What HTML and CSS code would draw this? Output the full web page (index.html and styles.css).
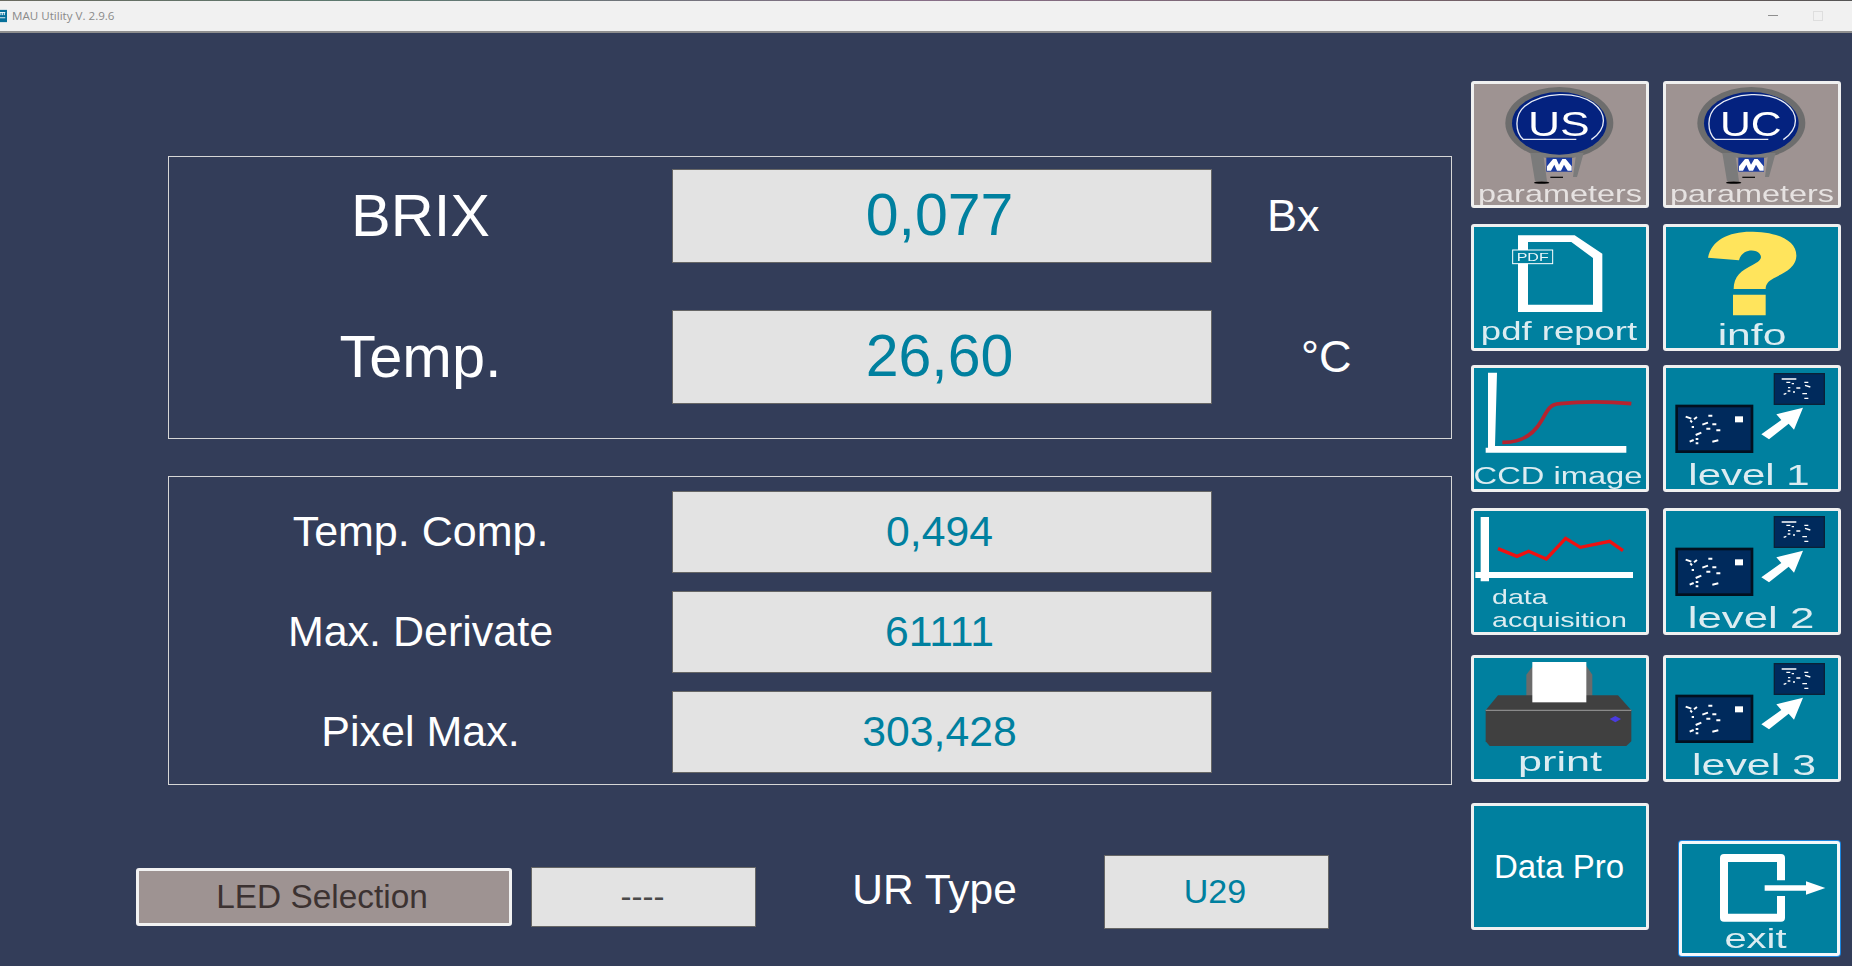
FILE: index.html
```html
<!DOCTYPE html>
<html lang="en">
<head>
<meta charset="utf-8">
<title>MAU Utility</title>
<link rel="stylesheet" href="styles.css">
</head>
<body>
<svg class="defs" width="0" height="0" aria-hidden="true">
  <defs>
    <g id="bulb">
      <ellipse cx="299" cy="160" rx="162" ry="108" fill="#6d6d6d"/>
      <path d="M212 250 L226 335 H262 L252 262 H348 L340 322 H352 L372 250 Z" fill="#7b7b7b"/>
      <ellipse cx="299" cy="161" rx="142" ry="94" fill="#04227f"/>
      <path d="M350 209 H190 C165 185 165 135 195 110 C250 65 350 65 400 100 C440 130 445 175 395 210" fill="none" stroke="#e8ecf6" stroke-width="4"/>
      <rect x="260" y="264" width="77" height="42" fill="#1a3aa0"/>
      <path d="M262 303 V290 L280 268 H290 L298 285 L308 268 H318 L336 290 V303 H324 L313 285 L304 303 H292 L284 285 L274 303 Z" fill="#fff"/>
      <ellipse cx="246" cy="339" rx="23" ry="3.5" fill="#000"/>
      <rect x="272" y="321" width="38" height="4" fill="#111"/>
    </g>
    <g id="level">
      <rect x="651" y="155" width="226" height="137" fill="#002a5c" stroke="#02101f" stroke-width="8"/>
      <rect x="944" y="58" width="150" height="92" fill="#002a5c" stroke="#0a2138" stroke-width="4"/>
      <polygon points="905,240 965,197 950,180 1030,160 1003,226 987,208 928,255" fill="#fff"/>
      <rect x="826" y="186" width="24" height="18" fill="#fff"/>
      <path d="M678 187 L695 193 M712 188 L703 195 M692 198 L697 204 M746 184 H758 M696 218 H703 M728 211 L745 205 M758 210 H770 M740 223 H752 M770 228 H782 M708 242 L725 235 M690 262 L702 257 M708 254 H716 M708 267 H716 M758 262 L776 258" stroke="#fff" stroke-width="6" fill="none"/>
      <path d="M966 74 H1010 M980 84 H992 M996 88 H1003 M1034 84 H1046 M1036 93 L1052 98 M1010 101 H1022 M985 100 H992 M984 110 H992 M972 120 L980 117 M1000 113 H1006 M1028 118 H1042 M1034 132 H1046" stroke="#fff" stroke-width="4" fill="none"/>
    </g>
  </defs>
</svg>

<header class="titlebar">
  <div class="title-left">
    <svg class="app-icon" viewBox="0 0 8 14"><rect width="8" height="14" fill="#06709a"/><path d="M0 3h6M1 3v3M3 3v3M5 3v3M0 9h6" stroke="#fff" stroke-width="1"/></svg>
    <span class="title-text">MAU Utility V. 2.9.6</span>
  </div>
  <div class="win-controls">
    <span class="win-min"></span>
    <span class="win-max"></span>
  </div>
</header>

<main class="content">
  <section class="left">
    <div class="panel panel-main">
      <div class="row row-big">
        <div class="label label-big">BRIX</div>
        <div class="field field-big">0,077</div>
        <div class="unit unit-bx">Bx</div>
      </div>
      <div class="row row-big">
        <div class="label label-big">Temp.</div>
        <div class="field field-big">26,60</div>
        <div class="unit unit-c">°C</div>
      </div>
    </div>

    <div class="panel panel-sub">
      <div class="row row-small">
        <div class="label label-small">Temp. Comp.</div>
        <div class="field field-small">0,494</div>
      </div>
      <div class="row row-small">
        <div class="label label-small">Max. Derivate</div>
        <div class="field field-small">61111</div>
      </div>
      <div class="row row-small">
        <div class="label label-small">Pixel Max.</div>
        <div class="field field-small">303,428</div>
      </div>
    </div>

    <div class="bottom">
      <div class="led-btn">LED Selection</div>
      <div class="dash-field">----</div>
      <div class="ur-label">UR Type</div>
      <div class="ur-field">U29</div>
    </div>
  </section>

  <aside class="right">
    <div class="tile-row">
      <div class="tile tile-gray">
        <svg class="art" viewBox="43 43 516 270"><use href="#bulb"/><text class="logo-text" x="205" y="199" textLength="185" lengthAdjust="spacingAndGlyphs">US</text></svg>
        <div class="cap cap-params">parameters</div>
      </div>
      <div class="tile tile-gray">
        <svg class="art" viewBox="43 43 516 270"><use href="#bulb"/><text class="logo-text" x="205" y="199" textLength="185" lengthAdjust="spacingAndGlyphs">UC</text></svg>
        <div class="cap cap-params">parameters</div>
      </div>
    </div>

    <div class="tile-row gap-16">
      <div class="tile">
        <svg class="art" viewBox="43 472 516 270">
          <path fill-rule="evenodd" fill="#fff" d="M175 497 H345 L428 552 V727 H175 Z M205 517 V705 H400 V565 L335 517 Z"/>
          <rect x="159" y="541" width="120" height="41" fill="#00809f" stroke="#fff" stroke-width="3"/>
          <text class="pdf-text" x="219" y="574" textLength="96" lengthAdjust="spacingAndGlyphs">PDF</text>
        </svg>
        <div class="cap cap-pdf">pdf report</div>
      </div>
      <div class="tile">
        <svg class="art" viewBox="619 472 516 270">
          <path fill="#ffe45c" d="M745 564 C755 510 810 484 880 486 C960 488 1012 515 1010 560 C1008 600 960 615 935 630 C922 638 918 648 918 658 H822 C822 620 845 602 880 585 C900 575 910 565 900 552 C885 535 845 540 838 572 Z M820 675 H918 V737 H820 Z"/>
        </svg>
        <div class="cap cap-info">info</div>
      </div>
    </div>

    <div class="tile-row gap-14">
      <div class="tile">
        <svg class="art" viewBox="43 41 516 270">
          <path d="M85 55 H112 L106 275 H500 V295 H78 V280 H85 Z" fill="#fff"/>
          <path d="M128 264 C190 265 225 235 245 200 C265 165 270 150 300 148 C380 140 450 142 515 148" fill="none" stroke="#b5232f" stroke-width="11"/>
        </svg>
        <div class="cap cap-ccd">CCD image</div>
      </div>
      <div class="tile">
        <svg class="art" viewBox="619 41 516 270"><use href="#level"/></svg>
        <div class="cap cap-level cap-l1">level 1</div>
      </div>
    </div>

    <div class="tile-row gap-16">
      <div class="tile">
        <svg class="art art-short" viewBox="43 469 516 216">
          <path d="M63 487 H88 V652 H520 V670 H88 V680 H63 V670 H47 V652 H63 Z" fill="#fff"/>
          <polyline points="115,582 172,605 207,590 260,613 318,551 362,578 450,560 490,588" fill="none" stroke="#ee1111" stroke-width="10"/>
        </svg>
        <div class="cap cap-data">data</div>
        <div class="cap cap-data cap-acq">acquisition</div>
      </div>
      <div class="tile">
        <svg class="art" viewBox="619 469 516 270"><use href="#level" y="428"/></svg>
        <div class="cap cap-level cap-l2">level 2</div>
      </div>
    </div>

    <div class="tile-row gap-20">
      <div class="tile">
        <svg class="art" viewBox="43 25 516 270">
          <polygon points="200,75 220,48 380,48 398,75 398,150 200,150" fill="#6b6b6b"/>
          <polygon points="78,182 115,137 475,137 515,182 515,275 500,289 90,289 78,275" fill="#404040"/>
          <path d="M78 182 H515" stroke="#8a8a8a" stroke-width="4"/>
          <rect x="218" y="37" width="162" height="121" fill="#fff"/>
          <polygon points="467,199 484,208 467,218 450,208" fill="#4a3be0"/>
        </svg>
        <div class="cap cap-print">print</div>
      </div>
      <div class="tile">
        <svg class="art" viewBox="619 25 516 270"><use href="#level" y="-16"/></svg>
        <div class="cap cap-level cap-l3">level 3</div>
      </div>
    </div>

    <div class="tile-row last-row">
      <div class="tile tile-text">Data Pro</div>
      <div class="tile tile-exit">
        <svg class="art art-exit" viewBox="665 581 465 240">
          <path d="M962 690 V623 H791 V802 H962 V737" fill="none" stroke="#fff" stroke-width="24" stroke-linejoin="round"/>
          <path d="M913 713 H1040" stroke="#fff" stroke-width="16"/>
          <polygon points="1037,693 1095,713 1037,733" fill="#fff"/>
        </svg>
        <div class="cap cap-exit">exit</div>
      </div>
    </div>
  </aside>
</main>
</body>
</html>
```

FILE: styles.css
```css
* { box-sizing: border-box; }

html, body {
  margin: 0;
  height: 100%;
}

body {
  width: 1852px;
  height: 966px;
  overflow: hidden;
  background: #333d59;
  font-family: "Liberation Sans", Arial, sans-serif;
  color: #fff;
}

.defs { display: block; height: 0; }

/* Title bar */
.titlebar {
  height: 33px;
  background:
    linear-gradient(90deg, #6b6b60, #5c7a70 20%, #886f88 50%, #6b5b5b 90%, #555) top / 100% 1px no-repeat,
    #f1f1f1;
  border-bottom: 2px solid #8f8f8f;
  display: flex;
  justify-content: space-between;
  align-items: center;
}

.title-left {
  display: flex;
  align-items: center;
  gap: 5px;
}

.app-icon { width: 7px; height: 14px; display: block; }

.title-text {
  font-family: "Open Sans", sans-serif;
  font-size: 11.6px;
  color: #8a8a8a;
}

.win-controls {
  display: flex;
  align-items: center;
  gap: 35px;
  padding-right: 29px;
}

.win-min { width: 10px; height: 1px; background: #8f8f8f; }

.win-max {
  width: 10px;
  height: 10px;
  border: 1px solid #dedede;
}

/* Layout */
.content { display: flex; }

.left {
  width: 1471px;
  padding: 123px 19px 0 136px;
}

.panel {
  width: 1284px;
  margin-left: 32px;
  border: 1px solid #d6d6d6;
}

.panel-main {
  height: 283px;
  padding-top: 12px;
}

.panel-sub {
  height: 309px;
  margin-top: 37px;
  padding-top: 14px;
}

.row {
  display: flex;
  align-items: center;
}

.row-big { height: 94px; }
.row-big + .row-big { margin-top: 47px; }
.row-small { height: 82px; }
.row-small + .row-small { margin-top: 18px; }

.label {
  width: 503px;
  text-align: center;
  flex: none;
  padding-bottom: 2px;
}

.label-big { font-size: 59.5px; }
.label-small { font-size: 43px; }

.field {
  width: 540px;
  flex: none;
  background: #e3e3e3;
  border: 1px solid #666;
  color: #00809f;
  display: flex;
  align-items: center;
  justify-content: center;
  padding: 0 5px 2px 0;
}

.field-big { height: 94px; font-size: 59px; }
.field-small { height: 82px; font-size: 42.7px; }

.unit { font-size: 45px; }
.unit-bx { margin-left: 55px; }
.unit-c { margin-left: 89px; }

/* Bottom row */
.bottom {
  display: flex;
  align-items: flex-start;
  margin-top: 70px;
}

.led-btn {
  width: 376px;
  height: 58px;
  margin-top: 13px;
  background: #9e9392;
  border: 3px solid #f2f2f2;
  border-radius: 3px;
  color: #3c3231;
  font-size: 33.4px;
  display: flex;
  align-items: center;
  justify-content: center;
  padding-right: 4px;
}

.dash-field {
  width: 225px;
  height: 60px;
  margin: 12px 0 0 19px;
  background: #e3e3e3;
  border: 1px solid #666;
  color: #4a4a4a;
  font-size: 33px;
  display: flex;
  align-items: center;
  justify-content: center;
  padding-right: 2px;
}

.ur-label {
  width: 348px;
  padding: 11px 0 0 9px;
  text-align: center;
  font-size: 42.5px;
}

.ur-field {
  width: 225px;
  height: 74px;
  background: #e3e3e3;
  border: 1px solid #666;
  color: #00809f;
  font-size: 34px;
  display: flex;
  align-items: center;
  justify-content: center;
  padding: 0 3px 2px 0;
}

/* Tiles */
.right {
  padding-top: 48px;
  flex: none;
}

.tile-row {
  display: flex;
  gap: 14px;
}

.gap-14 { margin-top: 14px; }
.gap-16 { margin-top: 16px; }
.gap-20 { margin-top: 20px; }

.last-row {
  margin-top: 21px;
  align-items: flex-start;
}

.tile {
  width: 178px;
  height: 127px;
  background: #00809f;
  border: 3px solid #f0f0f0;
  border-radius: 3px;
  overflow: hidden;
}

.tile-gray { background: #9e9392; }

.tile-text {
  font-size: 33px;
  display: flex;
  align-items: center;
  justify-content: center;
  padding-right: 2px;
}

.tile-exit {
  width: 161px;
  height: 115px;
  margin: 38px 0 0 16px;
  border-color: #f4f8fb;
  box-shadow: 0 0 0 1px #1b86e0;
}

.art {
  display: block;
  width: 172px;
  height: 90px;
  overflow: visible;
  filter: blur(0.4px);
}

.art-short { height: 72px; }
.art-exit { width: 155px; height: 80px; }

.logo-text {
  font-family: "Liberation Sans", Arial, sans-serif;
  font-size: 105px;
  fill: #fff;
}

.pdf-text {
  font-family: "Liberation Sans", Arial, sans-serif;
  font-size: 34px;
  fill: #eaf6fa;
  text-anchor: middle;
}

.cap {
  height: 30px;
  line-height: 30px;
  text-align: center;
  white-space: nowrap;
  color: #dcecf1;
  filter: blur(0.5px);
}

.cap-params { font-size: 24px; margin-top: 5px; transform: scaleX(1.35); color: #e6e2e1; }
.cap-pdf { font-size: 25px; margin-top: -1px; transform: translateX(-1px) scaleX(1.46); }
.cap-info { font-size: 30px; margin-top: 3px; transform: scaleX(1.42); }
.cap-ccd { font-size: 23.5px; margin-top: 3px; transform: translateX(-2px) scaleX(1.39); }
.cap-level { font-size: 30px; }
.cap-l1 { margin-top: 2px; transform: translateX(-3px) scaleX(1.4); }
.cap-l2 { margin-top: 2px; transform: translateX(-1px) scaleX(1.46); }
.cap-l3 { margin-top: 2px; transform: translateX(2px) scaleX(1.43); }
.cap-print { font-size: 28px; margin-top: -1px; transform: scaleX(1.54); }
.cap-exit { font-size: 27px; transform: translateX(-4px) scaleX(1.48); }

.cap-data {
  height: 23px;
  line-height: 23px;
  font-size: 21px;
  margin: 2px 0 0 18px;
  text-align: left;
  transform-origin: left center;
  transform: scaleX(1.36);
}

.cap-acq { margin-top: 0; }
```
